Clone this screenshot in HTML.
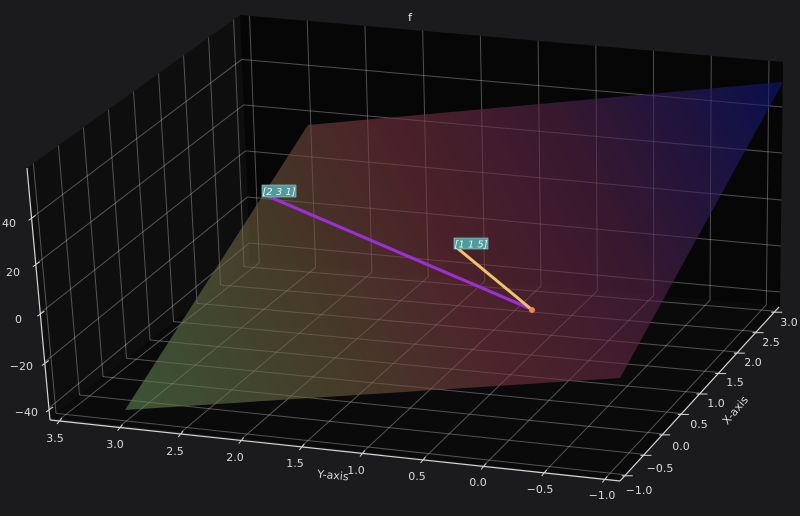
<!DOCTYPE html>
<html><head><meta charset="utf-8"><style>
html,body{margin:0;padding:0;background:#1b1b1d;}
svg{display:block;}
text{font-family:"DejaVu Sans","Liberation Sans",sans-serif;fill:#d8d8d8;font-size:11px;}
</style></head><body>
<svg id="s" width="800" height="516" viewBox="0 0 800 516" xmlns="http://www.w3.org/2000/svg">
<defs>
<linearGradient id="pg" gradientUnits="userSpaceOnUse" x1="140" y1="410" x2="780" y2="90">
<stop offset="0" stop-color="#5c8450"/>
<stop offset="0.28" stop-color="#6e5a3c"/>
<stop offset="0.48" stop-color="#7a3440"/>
<stop offset="0.7" stop-color="#5a2448"/>
<stop offset="1" stop-color="#0c167a"/>
</linearGradient>
</defs>
<rect width="800" height="516" fill="#1b1b1d"/>
<polygon points="27,168 240,15 250,262 50,418" fill="#0e0e0e"/>
<polygon points="240,15 783,62 780,306 250,262" fill="#060606"/>
<polygon points="50,418 250,262 780,306 620,480" fill="#0a0a0a"/>
<g id="grid" stroke="#c8c8c8" stroke-opacity="0.38" stroke-width="1" fill="none"></g>
<polygon points="125,410 620,378 783,82 308,125" fill="url(#pg)" opacity="0.6"/>
<g stroke="#d6d6d6" stroke-width="1.2" fill="none">
<line x1="27" y1="168" x2="50" y2="420"/>
<line x1="50" y1="420" x2="620" y2="481"/>
<line x1="620" y1="481" x2="779" y2="307"/>
</g>
<g id="ticks" stroke="#d6d6d6" stroke-width="1"></g>
<line x1="263" y1="194" x2="531" y2="309" stroke="#9a2fd2" stroke-width="3.2"/>
<line x1="456" y1="247" x2="531" y2="309" stroke="#eac56a" stroke-width="3"/>
<circle cx="532" cy="310" r="3" fill="#f0884a"/>
<rect x="262" y="185" width="34" height="12" fill="#4e9c9c" stroke="#9cc" stroke-width="0.6"/>
<text x="279" y="195" text-anchor="middle" style="font-size:10px;font-style:italic;fill:#eee">[2 3 1]</text>
<rect x="454" y="238" width="34" height="11" fill="#4e9c9c" stroke="#9cc" stroke-width="0.6"/>
<text x="471" y="247.5" text-anchor="middle" style="font-size:10px;font-style:italic;fill:#eee">[1 1 5]</text>
<text x="410" y="21" text-anchor="middle" style="font-size:11px;fill:#eee">f</text>
<g text-anchor="end">
<text x="16" y="227">40</text>
<text x="20" y="276">20</text>
<text x="22" y="323">0</text>
<text x="33" y="370">−20</text>
<text x="38" y="416">−40</text>
</g>
<g text-anchor="middle">
<text x="55" y="442">3.5</text>
<text x="115" y="448">3.0</text>
<text x="175" y="455">2.5</text>
<text x="235" y="461">2.0</text>
<text x="295" y="467">1.5</text>
<text x="356" y="474">1.0</text>
<text x="417" y="480">0.5</text>
<text x="478" y="486">0.0</text>
<text x="540" y="493">−0.5</text>
<text x="602" y="499">−1.0</text>
</g>
<text x="333" y="479" text-anchor="middle" transform="rotate(5 333 475)">Y-axis</text>
<g text-anchor="middle">
<text x="789" y="326">3.0</text>
<text x="771" y="346">2.5</text>
<text x="753" y="366">2.0</text>
<text x="735" y="386">1.5</text>
<text x="716" y="407">1.0</text>
<text x="699" y="428">0.5</text>
<text x="681" y="450">0.0</text>
<text x="660" y="472">−0.5</text>
<text x="639" y="494">−1.0</text>
</g>
<text x="735" y="414" text-anchor="middle" transform="rotate(-50 735 410)">X-axis</text>
</svg>
<script>
(function(){
var g=document.getElementById('grid'),tk=document.getElementById('ticks');
function L(p,q,t){return [p[0]+(q[0]-p[0])*t,p[1]+(q[1]-p[1])*t];}
function ln(el,a,b){var l=document.createElementNS('http://www.w3.org/2000/svg','line');
l.setAttribute('x1',a[0]);l.setAttribute('y1',a[1]);l.setAttribute('x2',b[0]);l.setAttribute('y2',b[1]);el.appendChild(l);}
var FL=[50,418],BL=[250,262],BR=[780,306],FR=[620,480],TL=[27,168],TB=[240,15],TR=[783,62];
var k,f,j,gg;
for(k=0;k<10;k++){f=0.0175+k*0.1063;
 ln(g,L(FL,FR,f),L(BL,BR,f));
 ln(g,L(BL,BR,f),L(TB,TR,f));
 var p=L([50,420],[620,481],f);ln(tk,[p[0]+2,p[1]-3],[p[0]-3,p[1]+3]);}
for(j=0;j<9;j++){gg=0.03+j*0.1175;
 ln(g,L(FL,BL,gg),L(FR,BR,gg));
 ln(g,L(FL,BL,gg),L(TL,TB,gg));
 var q=L([620,481],[779,307],gg);ln(tk,[q[0]-3,q[1]],[q[0]+8,q[1]]);}
var lz=[0.2,0.384,0.58,0.776,0.96],bz=[0.18,0.364,0.55,0.737,0.923];
var ry=[107,153,200,246,292];
for(k=0;k<5;k++){var a=L(TL,FL,lz[k]),b=L(TB,BL,bz[k]);
 ln(g,a,b);
 var t=(ry[k]-62)/(306-62);ln(g,b,L(TR,BR,t));
 var c=L([27,168],[50,420],lz[k]);ln(tk,[c[0]-3,c[1]+2],[c[0]+4,c[1]-3]);}
})();
</script>
</body></html>
